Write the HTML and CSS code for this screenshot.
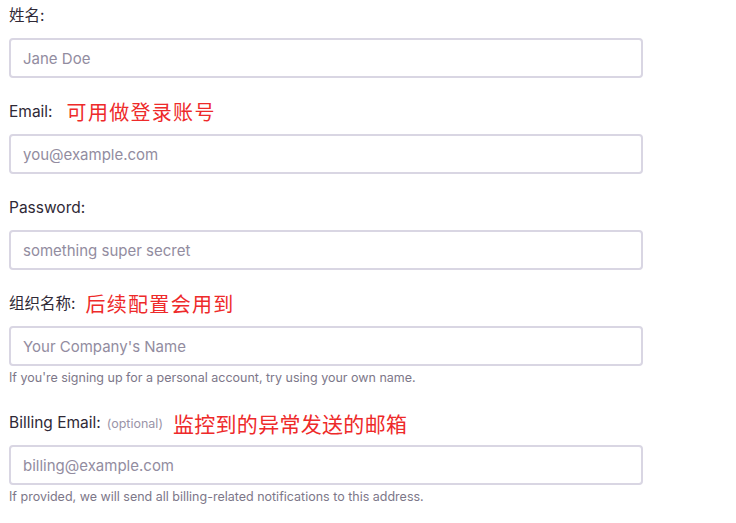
FILE: index.html
```html
<!DOCTYPE html>
<html lang="zh">
<head>
<meta charset="utf-8">
<link rel="stylesheet" href="styles.css">
</head>
<body>
<form class="form">
  <div class="field">
    <div class="label-row"><span class="label">姓名:</span></div>
    <input class="input" type="text" placeholder="Jane Doe">
  </div>
  <div class="field">
    <div class="label-row"><span class="label">Email:</span><span class="note note-email">可用做登录账号</span></div>
    <input class="input" type="text" placeholder="you@example.com">
  </div>
  <div class="field">
    <div class="label-row"><span class="label">Password:</span></div>
    <input class="input" type="text" placeholder="something super secret">
  </div>
  <div class="field">
    <div class="label-row"><span class="label">组织名称:</span><span class="note">后续配置会用到</span></div>
    <input class="input" type="text" placeholder="Your Company's Name">
    <p class="help">If you're signing up for a personal account, try using your own name.</p>
  </div>
  <div class="field">
    <div class="label-row"><span class="label">Billing Email:</span><span class="optional">(optional)</span><span class="note note-big">监控到的异常发送的邮箱</span></div>
    <input class="input" type="text" placeholder="billing@example.com">
    <p class="help">If provided, we will send all billing-related notifications to this address.</p>
  </div>
</form>
</body>
</html>
```

FILE: styles.css
```css
html, body {
  margin: 0;
  padding: 0;
  background: #ffffff;
}

body {
  font-family: Inter, "Noto Sans CJK SC", sans-serif;
  color: #2f2936;
}

.form {
  width: 634px;
  padding: 4px 0 0 9px;
  display: flex;
  flex-direction: column;
}

.field {
  display: flex;
  flex-direction: column;
  margin-bottom: 22px;
}

.label-row {
  height: 24px;
  margin-bottom: 10px;
  display: flex;
  align-items: center;
}

.label {
  font-size: 15.5px;
  line-height: 20px;
  color: #2f2936;
}

.optional {
  font-size: 12.5px;
  color: #9a94a8;
  margin-left: 6px;
}

.note {
  font-family: "Noto Sans CJK SC", sans-serif;
  font-size: 20px;
  line-height: 24px;
  letter-spacing: 1.3px;
  color: #ee2a2a;
  margin-left: 10px;
}

.note-email {
  margin-left: 14px;
}

.note-big {
  font-size: 21px;
  letter-spacing: 0.3px;
  margin-left: 10px;
}

.input {
  box-sizing: border-box;
  width: 634px;
  height: 40px;
  margin: 0;
  padding: 0 12px;
  border: 2px solid #d9d6e3;
  border-radius: 4px;
  background: #fff;
  font-family: Inter, sans-serif;
  font-size: 15px;
  color: #2f2936;
  outline: none;
}

.input::placeholder {
  color: #928ca0;
}

.help {
  margin: 4px 0 3px;
  font-size: 12.5px;
  line-height: 16px;
  color: #7d7789;
}
```
